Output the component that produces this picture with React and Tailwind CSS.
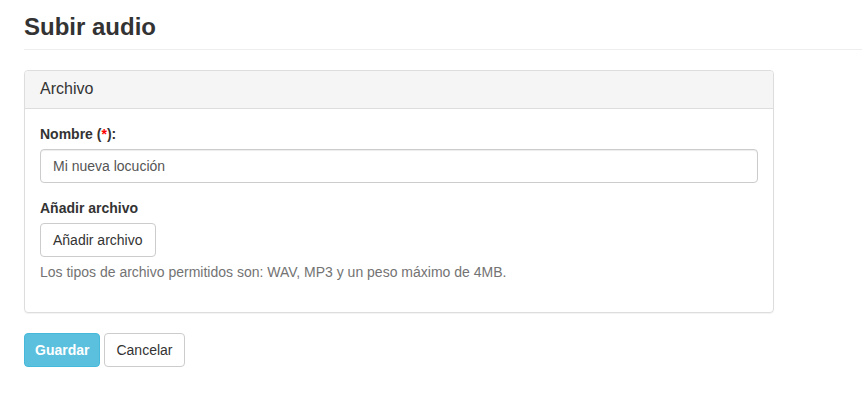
export default function App() {
  return (
    <div className="min-h-[404px] bg-white px-6 pt-[14px] text-[14px] leading-[1.43] text-[#333] font-['Liberation_Sans',Arial,sans-serif]">
      <h1 className="pb-[9px] text-[24px] font-bold leading-[1.1] border-b border-[#eee] -mr-6">Subir audio</h1>

      <div className="mt-5 w-[750px] rounded border border-[#ddd] shadow-[0_1px_1px_rgba(0,0,0,0.05)]">
        <div className="h-[38px] px-[15px] flex items-center bg-[#f5f5f5] border-b border-[#ddd] rounded-t text-[16px]">
          Archivo
        </div>
        <div className="p-[15px] pb-[20px]">
          <div className="mb-[15px]">
            <label className="block mb-[5px] font-bold">
              Nombre (<span className="text-[#ff0000]">*</span>):
            </label>
            <input
              type="text"
              defaultValue="Mi nueva locución"
              className="block w-full h-[34px] px-3 rounded border border-[#ccc] text-[#555] shadow-[inset_0_1px_1px_rgba(0,0,0,0.075)] outline-none"
            />
          </div>
          <div>
            <label className="block mb-[5px] font-bold">Añadir archivo</label>
            <button className="h-[34px] px-3 rounded border border-[#ccc] bg-white">Añadir archivo</button>
            <p className="mt-[5px] mb-[10px] text-[#737373]">
              Los tipos de archivo permitidos son: WAV, MP3 y un peso máximo de 4MB.
            </p>
          </div>
        </div>
      </div>

      <div className="mt-5 flex gap-1">
        <button className="h-[34px] px-[10px] rounded border border-[#46b8da] bg-[#5bc0de] text-white font-bold">Guardar</button>
        <button className="h-[34px] px-[11px] rounded border border-[#ccc] bg-white">Cancelar</button>
      </div>
    </div>
  )
}
